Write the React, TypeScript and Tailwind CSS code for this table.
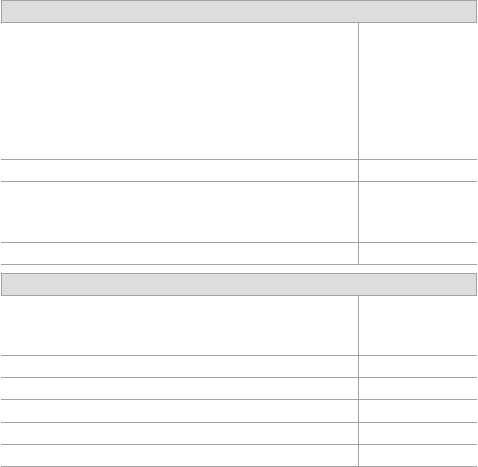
import React from 'react'

type Section = { rows: number[] }

const sections: Section[] = [
  { rows: [137, 22, 61, 22] },
  { rows: [60, 22, 22, 23, 22, 22] },
]

const Row = ({ h }: { h: number }) => (
  <div className="flex border-b border-[#a3a3a3]" style={{ height: h }}>
    <div className="w-[357px]" />
    <div className="flex-1 border-l border-[#a3a3a3]" />
  </div>
)

const App = () => {
  return (
    <div className="ml-[1px] w-[476px] bg-white font-['Liberation_Sans',sans-serif]">
      {sections.map((s, i) => (
        <div key={i} className={i > 0 ? 'mt-[8px]' : ''}>
          <div className="h-[23px] border border-[#a3a3a3] bg-[#dcdddc]" />
          {s.rows.map((h, j) => (
            <Row key={j} h={h} />
          ))}
        </div>
      ))}
    </div>
  )
}

export default App
